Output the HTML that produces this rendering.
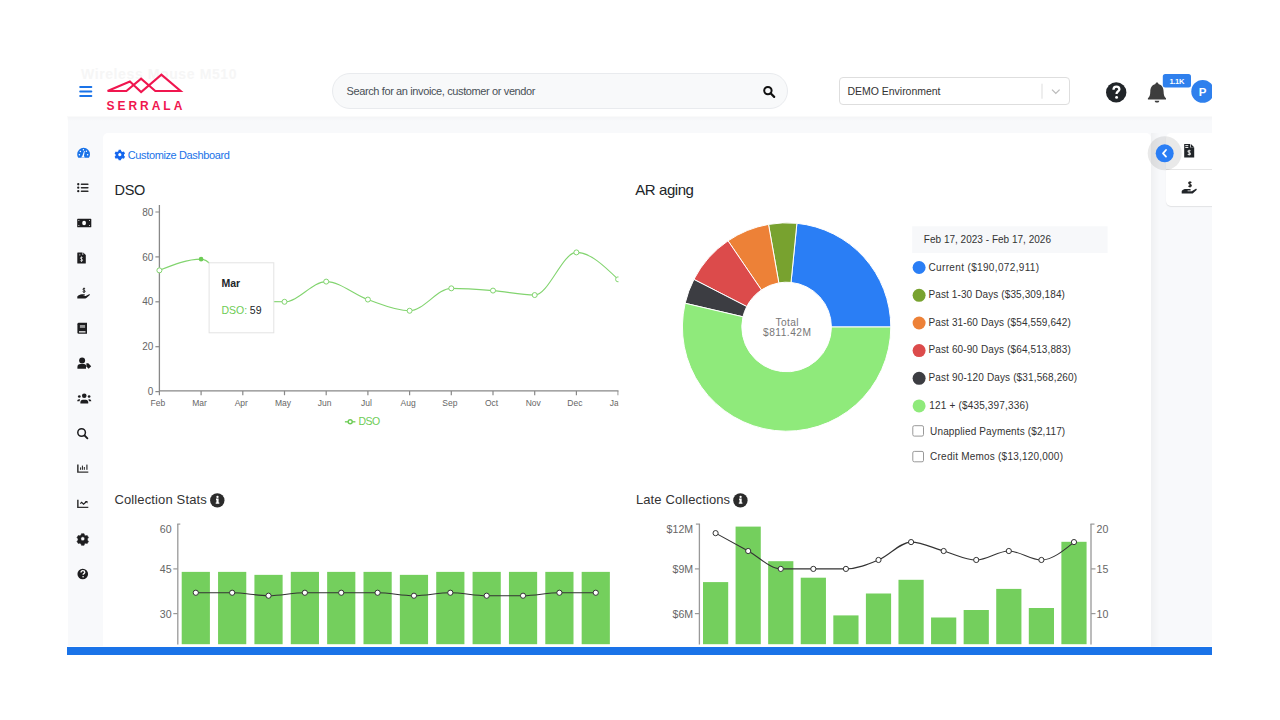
<!DOCTYPE html>
<html><head><meta charset="utf-8">
<style>
*{box-sizing:border-box;margin:0;padding:0}
html,body{width:1280px;height:720px;background:#fff;overflow:hidden;font-family:"Liberation Sans",sans-serif;color:#212529}
.abs{position:absolute}
#page{position:absolute;left:67px;top:0;width:1145px;height:655px;overflow:hidden;background:#fff}
#ghost{left:14px;top:65px;font-size:15px;color:#f3f3f3;white-space:nowrap}
#bg{left:1px;top:116.5px;width:1144px;height:529.5px;background:#f8f9fb}
#card{left:35.8px;top:133px;width:1048px;height:560px;background:#fff;border-radius:5px}
#side2{left:1099px;top:133px;width:60px;height:72.5px;background:#fff;border-radius:5px;box-shadow:0 1px 1px rgba(0,0,0,0.09)}
#cshadow{left:1084px;top:133px;width:9px;height:530px;background:linear-gradient(to right,rgba(0,0,0,0.035),rgba(0,0,0,0))}
#hshadow{left:0;top:116px;width:1145px;height:5px;background:linear-gradient(to bottom,rgba(0,0,0,0.025),rgba(0,0,0,0))}
#side2 .div{position:absolute;left:0;top:36px;width:60px;height:1px;background:#e6e6e6}
#bottom{left:0;top:647px;width:1145px;height:8px;background:#1a73e8}
#search{left:264.6px;top:73.2px;width:456.7px;height:35.4px;border-radius:18px;background:#f8f9fa;border:1px solid #e9ebee}
#search span{position:absolute;left:15px;top:10px;font-size:11px;color:#495057;white-space:nowrap}
#env{left:772.3px;top:77.2px;width:230.7px;height:28px;border:1px solid #dedede;border-radius:4px;background:#fff}
#env span{position:absolute;left:7.5px;top:7px;font-size:11px;color:#333;white-space:nowrap}
.t{position:absolute;white-space:nowrap}
svg text{font-family:"Liberation Sans",sans-serif}
.tk{font-size:10px;fill:#666}
.tk2{font-size:10.6px;fill:#666}
.tkx{font-size:8.5px;fill:#666}
</style></head><body>
<div id="page">
  
  <div id="bg" class="abs"></div>
  <div id="hshadow" class="abs"></div><div id="cshadow" class="abs"></div><div id="card" class="abs"></div>
  <div id="side2" class="abs"><div class="div"></div></div>
  <div id="search" class="abs"></div>
  <div id="env" class="abs"></div>
</div>
<div class="abs" id="bottom" style="left:67px"></div>

<svg class="abs" style="left:0;top:0" width="1280" height="720" viewBox="0 0 1280 720">
<defs><clipPath id="pg"><rect x="67" y="0" width="1145" height="647"/></clipPath></defs>
<g clip-path="url(#pg)">
<text x="81" y="78.6" font-size="14" font-weight="bold" fill="#f6f6f6" textLength="155.5" lengthAdjust="spacing">Wireless Mouse M510</text>
<!-- hamburger -->
<g stroke="#1a73e8" stroke-width="2" stroke-linecap="round"><line x1="80.2" y1="86.9" x2="91.3" y2="86.9"/><line x1="80.2" y1="91.5" x2="91.3" y2="91.5"/><line x1="80.2" y1="96" x2="91.3" y2="96"/></g>
<!-- logo -->
<path d="M126.4,91 H107.6 L129.9,81.5 L141.1,92 L161.4,74.6 L180.6,91 H155.3 L141.1,78.6 Z" fill="none" stroke="#f0164f" stroke-width="2.1" stroke-linejoin="miter"/>
<text x="106.6" y="109.8" font-size="12" font-weight="bold" fill="#f0164f" letter-spacing="2.95">SERRALA</text>
<text x="346.5" y="95.1" font-size="11" fill="#495057" textLength="189" lengthAdjust="spacing">Search for an invoice, customer or vendor</text>
<text x="847.5" y="94.9" font-size="10.5" fill="#333" textLength="93" lengthAdjust="spacing">DEMO Environment</text>
<!-- search icon -->
<circle cx="767.9" cy="90.6" r="3.7" fill="none" stroke="#111" stroke-width="2"/>
<line x1="770.6" y1="93.3" x2="774.2" y2="96.9" stroke="#111" stroke-width="2.2" stroke-linecap="round"/>
<!-- env separator & chevron -->
<line x1="1042" y1="83.7" x2="1042" y2="98.7" stroke="#ddd" stroke-width="1"/>
<path d="M1052,89.6 L1055.8,93.4 L1059.6,89.6" fill="none" stroke="#bbb" stroke-width="1.3"/>
<!-- help -->
<circle cx="1116.2" cy="92.4" r="10.2" fill="#212529"/>
<path d="M1113.5,89.8 c0,-2 1.2,-3.2 2.9,-3.2 c1.8,0 3,1.1 3,2.7 c0,2.1 -2.8,2.3 -2.8,4.1 v0.7" fill="none" stroke="#fff" stroke-width="2.3"/><circle cx="1116.6" cy="97.4" r="1.45" fill="#fff"/>
<!-- bell -->
<path d="M1157,82.6 c0.9,0 1.4,0.6 1.4,1.3 c3.6,0.8 5.2,3.8 5.2,7.6 c0,4 1,5.5 2.4,6.8 v1.3 h-18.1 v-1.3 c1.4,-1.3 2.4,-2.8 2.4,-6.8 c0,-3.8 1.6,-6.8 5.2,-7.6 c0,-0.7 0.6,-1.3 1.5,-1.3 z M1154.7,100.7 h4.6 c0,1.3 -1,1.9 -2.3,1.9 c-1.3,0 -2.3,-0.6 -2.3,-1.9z" fill="#3d3d3d"/>
<!-- badge -->
<rect x="1162.8" y="73.9" width="28.2" height="13.6" rx="2.5" fill="#2f80ed"/>
<text x="1169.4" y="83.5" font-size="7.6" font-weight="bold" fill="#fff" textLength="15" lengthAdjust="spacing">1.1K</text>
<!-- avatar -->
<circle cx="1202.7" cy="91.4" r="11.4" fill="#2f80ed"/>
<text x="1202.7" y="95.6" font-size="11.5" font-weight="bold" fill="#fff" text-anchor="middle">P</text>
</g>

<!-- sidebar icons -->
<g fill="#1d1d1f">
 <!-- tachometer (blue) -->
 <path d="M83.6,147.8 a6.4,6.4 0 0 1 6.4,6.4 c0,1.5 -0.5,2.6 -1.1,3.5 h-10.6 c-0.6,-0.9 -1.1,-2 -1.1,-3.5 a6.4,6.4 0 0 1 6.4,-6.4z" fill="#1a73e8"/>
 <g fill="#fff"><circle cx="79.4" cy="154.8" r="0.75"/><circle cx="80.4" cy="151.4" r="0.75"/><circle cx="87.6" cy="154.8" r="0.75"/><circle cx="83.4" cy="149.8" r="0.7"/><circle cx="86.4" cy="151.3" r="0.7"/><path d="M82.2,156.2 l1.9,-5.3 l0.7,0.2 l-0.9,5.1 c0.6,0.3 0.9,0.7 0.9,1.3 h-3.5 c0,-0.6 0.3,-1.1 0.9,-1.3z"/></g>
 <!-- list -->
 <circle cx="78.25" cy="184.25" r="1.15"/><circle cx="78.25" cy="187.7" r="1.15"/><circle cx="78.25" cy="191.2" r="1.15"/>
 <g stroke="#2b2b2b" stroke-width="1.4" stroke-linecap="round"><line x1="81.4" y1="184.25" x2="87.9" y2="184.25"/><line x1="81.4" y1="187.7" x2="87.9" y2="187.7"/><line x1="81.4" y1="191.2" x2="87.9" y2="191.2"/></g>
 <!-- money bill -->
 <rect x="77.2" y="218.8" width="14.1" height="8.5" rx="0.6"/>
 <g fill="#fff"><ellipse cx="84.1" cy="223" rx="1.9" ry="2.25"/><circle cx="78.9" cy="220.5" r="0.5"/><circle cx="78.9" cy="225.5" r="0.5"/><circle cx="89.5" cy="220.5" r="0.5"/><circle cx="89.5" cy="225.5" r="0.5"/></g>
 <!-- file invoice dollar -->
 <path d="M77.8,252.5 h4.7 v2.5 h3.3 v8 a0.5,0.5 0 0 1 -0.5,0.5 h-7.5 a0.5,0.5 0 0 1 -0.5,-0.5 v-10 a0.5,0.5 0 0 1 0.5,-0.5z M83.2,252.5 l2.6,2.6 h-2.6z"/>
 <g fill="#999"><ellipse cx="79.8" cy="254.8" rx="0.6" ry="1"/></g>
 <g transform="translate(79.9,256.4) scale(0.8000,0.8000)"><path d="M3.4,1.9 C3.2,1.3 2.7,1.1 2,1.1 C1.2,1.1 0.65,1.5 0.65,2.15 C0.65,3.6 3.4,3.05 3.4,4.8 C3.4,5.5 2.8,5.9 2,5.9 C1.2,5.9 0.7,5.6 0.5,5 M2,0.2 V6.8" fill="none" stroke="#ddd" stroke-width="1.15"/></g>
 <!-- hand holding usd -->
 <g transform="translate(82.4,287.5) scale(0.8000,0.8000)"><path d="M3.4,1.9 C3.2,1.3 2.7,1.1 2,1.1 C1.2,1.1 0.65,1.5 0.65,2.15 C0.65,3.6 3.4,3.05 3.4,4.8 C3.4,5.5 2.8,5.9 2,5.9 C1.2,5.9 0.7,5.6 0.5,5 M2,0.2 V6.8" fill="none" stroke="#222" stroke-width="1.15"/></g>
 <path d="M77.3,296.6 c1.3,-1.4 2.8,-2.3 4.5,-2.3 h2.5 c0.7,0 0.9,0.8 0.4,1.1 l-1.9,0.6 h2.9 l3.4,-1.7 c0.6,-0.3 1.1,0.4 0.7,0.8 l-3.4,3 c-0.3,0.3 -0.7,0.4 -1.1,0.4 h-8z"/>
 <!-- book -->
 <path d="M78.8,322.8 h8.2 v11 h-8.2 a1.4,1.4 0 0 1 -1.4,-1.4 v-8.2 a1.4,1.4 0 0 1 1.4,-1.4z"/>
 <rect x="79.9" y="325" width="5.2" height="2.9" fill="#9a9a9a"/>
 <rect x="79" y="331" width="6.5" height="1.6" fill="#ccc"/>
 <!-- user tag -->
 <circle cx="82.1" cy="360.4" r="3"/>
 <path d="M77.4,368.8 v-1.6 a3.2,3.2 0 0 1 3.2,-3.2 h3.2 a2.6,2.6 0 0 1 2.2,1.2 v3.6z"/>
 <path d="M86.4,363.3 h1.9 l2.9,2.9 l-2.6,2.6 l-2.2,-2.2z"/>
 <!-- users -->
 <circle cx="84.25" cy="395.8" r="2.3"/><circle cx="79.3" cy="396.5" r="1.35"/><circle cx="89.1" cy="396.5" r="1.35"/>
 <path d="M80.4,403.5 v-1.3 a2.5,2.5 0 0 1 2.5,-2.5 h2.8 a2.5,2.5 0 0 1 2.5,2.5 v1.3z"/>
 <path d="M77.2,401.3 c0,-1.2 0.8,-2 2,-2 h0.9 l-0.6,2z M91.3,401.3 c0,-1.2 -0.8,-2 -2,-2 h-0.9 l0.6,2z"/>
 <!-- search -->
 <circle cx="81.6" cy="432.5" r="3.8" fill="none" stroke="#1d1d1f" stroke-width="1.5"/>
 <line x1="84.6" y1="435.5" x2="87.4" y2="438.3" stroke="#1d1d1f" stroke-width="1.8" stroke-linecap="round"/>
 <!-- chart bar -->
 <path d="M77.1,464.4 h1.5 v7 h9.7 v1.4 h-11.2z" fill="#333"/>
 <rect x="80" y="467.4" width="1.1" height="2.4" fill="#333"/><rect x="81.9" y="465.6" width="1.1" height="4.2" fill="#333"/><rect x="83.8" y="467" width="1.1" height="2.8" fill="#333"/><rect x="86.3" y="464.6" width="1.2" height="5.2" fill="#333"/>
 <!-- chart line -->
 <path d="M77.1,499.8 h1.5 v6.9 h9.7 v1.4 h-11.2z" fill="#333"/>
 <path d="M80.3,503.6 l1.3,-1.2 l2,1.8 l2.6,-2.4" fill="none" stroke="#1d1d1f" stroke-width="1.2"/>
 <path d="M84.9,500.9 h2.6 v2.6z"/>
 <!-- cog -->
 <g transform="translate(82.75,538.75)">
  <path d="M-1.3,-5.1 h2.6 l0.5,1.6 l1.1,0.6 l1.6,-0.4 l1.3,2.2 l-1.1,1.2 v1.3 l1.1,1.2 l-1.3,2.2 l-1.6,-0.4 l-1.1,0.6 l-0.5,1.6 h-2.6 l-0.5,-1.6 l-1.1,-0.6 l-1.6,0.4 l-1.3,-2.2 l1.1,-1.2 v-1.3 l-1.1,-1.2 l1.3,-2.2 l1.6,0.4 l1.1,-0.6z M0,-1.9 a1.9,1.9 0 1 0 0.01,0z" fill-rule="evenodd" stroke="#1d1d1f" stroke-width="0.5" stroke-linejoin="round"/>
 </g>
 <!-- question circle -->
 <circle cx="82.75" cy="574" r="5.3"/>
 <path d="M81,572.6 c0,-1.2 0.8,-1.9 1.9,-1.9 c1.1,0 1.9,0.7 1.9,1.6 c0,1.3 -1.7,1.3 -1.7,2.4" fill="none" stroke="#fff" stroke-width="1.3"/>
 <circle cx="83.1" cy="576.8" r="0.8" fill="#fff"/>
</g>

<!-- right side panel icons -->
<g fill="#212529">
 <path d="M1184.2,143.9 h6 v3.6 h4 v10 h-10z M1190.9,143.9 l3.3,3.3 h-3.3z"/>
 <g fill="#fff"><rect x="1185.3" y="145.2" width="3" height="0.9"/><rect x="1185.3" y="147.1" width="3" height="0.9"/></g>
 <g transform="translate(1187.4,149.5) scale(0.9000,0.9000)"><path d="M3.4,1.9 C3.2,1.3 2.7,1.1 2,1.1 C1.2,1.1 0.65,1.5 0.65,2.15 C0.65,3.6 3.4,3.05 3.4,4.8 C3.4,5.5 2.8,5.9 2,5.9 C1.2,5.9 0.7,5.6 0.5,5 M2,0.2 V6.8" fill="none" stroke="#ddd" stroke-width="1.15"/></g>
 <g transform="translate(1188.1,181.0) scale(0.9500,0.9429)"><path d="M3.4,1.9 C3.2,1.3 2.7,1.1 2,1.1 C1.2,1.1 0.65,1.5 0.65,2.15 C0.65,3.6 3.4,3.05 3.4,4.8 C3.4,5.5 2.8,5.9 2,5.9 C1.2,5.9 0.7,5.6 0.5,5 M2,0.2 V6.8" fill="none" stroke="#222" stroke-width="1.15"/></g>
 <path d="M1181.7,191 c1.2,-1.4 2.6,-2 4.2,-2 h4 c0.8,0 1.2,0.8 0.7,1.4 h-3 v0.8 h4.1 l3.8,-2.3 c0.7,-0.5 1.6,0.3 1.1,1 l-3.9,3.7 h-11z"/>
</g>
<!-- collapse button -->
<circle cx="1164.7" cy="153.3" r="17" fill="#000" fill-opacity="0.085"/>
<circle cx="1164.7" cy="153.3" r="9" fill="#2a7ef5"/>
<path d="M1166,150 l-3,3.3 l3,3.3" fill="none" stroke="#fff" stroke-width="1.8" stroke-linecap="round" stroke-linejoin="round"/>

<!-- card content -->
<g fill="#1566ee" transform="translate(119.8,154.7) scale(0.93)">
  <path d="M-1.2,-5.2 h2.4 l0.4,1.5 l1.3,0.7 l1.5,-0.5 l1.2,2.1 l-1.1,1.1 v1.5 l1.1,1.1 l-1.2,2.1 l-1.5,-0.5 l-1.3,0.7 l-0.4,1.5 h-2.4 l-0.4,-1.5 l-1.3,-0.7 l-1.5,0.5 l-1.2,-2.1 l1.1,-1.1 v-1.5 l-1.1,-1.1 l1.2,-2.1 l1.5,0.5 l1.3,-0.7z M0,-1.7 a1.7,1.7 0 1 0 0.01,0z" fill-rule="evenodd"/>
</g>
<text x="127.8" y="158.8" font-size="11" fill="#1a73e8" textLength="102" lengthAdjust="spacing">Customize Dashboard</text>
<text x="114.6" y="194.7" font-size="14.5" fill="#212529" textLength="30.8" lengthAdjust="spacing">DSO</text>
<text x="635.3" y="195.2" font-size="15" fill="#212529" textLength="58.6" lengthAdjust="spacing">AR aging</text>
<text x="114.4" y="503.5" font-size="13" fill="#333" textLength="92.4" lengthAdjust="spacing">Collection Stats</text>
<circle cx="217.3" cy="500.4" r="7.2" fill="#2b2b2b"/><circle cx="217.5" cy="496.9" r="1.15" fill="#fff"/><path d="M216,498.6 h2.6 v3.9 h0.7 v1.3 h-3.6 v-1.3 h0.7 v-2.6 h-0.4z" fill="#fff"/>
<text x="635.9" y="503.5" font-size="13" fill="#333" textLength="94.2" lengthAdjust="spacing">Late Collections</text>
<circle cx="740.4" cy="500.4" r="7.2" fill="#2b2b2b"/><circle cx="740.6" cy="496.9" r="1.15" fill="#fff"/><path d="M739.1,498.6 h2.6 v3.9 h0.7 v1.3 h-3.6 v-1.3 h0.7 v-2.6 h-0.4z" fill="#fff"/>

<!-- DSO chart -->
<g clip-path="url(#dsoclip)">
<defs><clipPath id="dsoclip"><rect x="100" y="200" width="518.5" height="230"/></clipPath></defs>
<path d="M159.4,205 V390.9 H640" fill="none" stroke="#888" stroke-width="1.3"/>
<line x1="155.4" y1="391.6" x2="159.4" y2="391.6" stroke="#888" stroke-width="1.2"/>
<text x="153.4" y="395.2" text-anchor="end" class="tk">0</text>
<line x1="155.4" y1="346.7" x2="159.4" y2="346.7" stroke="#888" stroke-width="1.2"/>
<text x="153.4" y="350.3" text-anchor="end" class="tk">20</text>
<line x1="155.4" y1="301.8" x2="159.4" y2="301.8" stroke="#888" stroke-width="1.2"/>
<text x="153.4" y="305.4" text-anchor="end" class="tk">40</text>
<line x1="155.4" y1="256.9" x2="159.4" y2="256.9" stroke="#888" stroke-width="1.2"/>
<text x="153.4" y="260.5" text-anchor="end" class="tk">60</text>
<line x1="155.4" y1="212" x2="159.4" y2="212" stroke="#888" stroke-width="1.2"/>
<text x="153.4" y="215.6" text-anchor="end" class="tk">80</text>
<line x1="159.4" y1="390.9" x2="159.4" y2="395.2" stroke="#888" stroke-width="1.2"/>
<text x="157.9" y="406" text-anchor="middle" class="tkx">Feb</text>
<line x1="201.1" y1="390.9" x2="201.1" y2="395.2" stroke="#888" stroke-width="1.2"/>
<text x="199.6" y="406" text-anchor="middle" class="tkx">Mar</text>
<line x1="242.8" y1="390.9" x2="242.8" y2="395.2" stroke="#888" stroke-width="1.2"/>
<text x="241.3" y="406" text-anchor="middle" class="tkx">Apr</text>
<line x1="284.5" y1="390.9" x2="284.5" y2="395.2" stroke="#888" stroke-width="1.2"/>
<text x="283" y="406" text-anchor="middle" class="tkx">May</text>
<line x1="326.2" y1="390.9" x2="326.2" y2="395.2" stroke="#888" stroke-width="1.2"/>
<text x="324.7" y="406" text-anchor="middle" class="tkx">Jun</text>
<line x1="367.9" y1="390.9" x2="367.9" y2="395.2" stroke="#888" stroke-width="1.2"/>
<text x="366.4" y="406" text-anchor="middle" class="tkx">Jul</text>
<line x1="409.6" y1="390.9" x2="409.6" y2="395.2" stroke="#888" stroke-width="1.2"/>
<text x="408.1" y="406" text-anchor="middle" class="tkx">Aug</text>
<line x1="451.3" y1="390.9" x2="451.3" y2="395.2" stroke="#888" stroke-width="1.2"/>
<text x="449.8" y="406" text-anchor="middle" class="tkx">Sep</text>
<line x1="493" y1="390.9" x2="493" y2="395.2" stroke="#888" stroke-width="1.2"/>
<text x="491.5" y="406" text-anchor="middle" class="tkx">Oct</text>
<line x1="534.7" y1="390.9" x2="534.7" y2="395.2" stroke="#888" stroke-width="1.2"/>
<text x="533.2" y="406" text-anchor="middle" class="tkx">Nov</text>
<line x1="576.4" y1="390.9" x2="576.4" y2="395.2" stroke="#888" stroke-width="1.2"/>
<text x="574.9" y="406" text-anchor="middle" class="tkx">Dec</text>
<line x1="618.1" y1="390.9" x2="618.1" y2="395.2" stroke="#888" stroke-width="1.2"/>
<text x="616.6" y="406" text-anchor="middle" class="tkx">Jan</text>
<path d="M159.4,270.37C173.3,264.76 187.2,259.14 201.1,259.14C215,259.14 228.9,298.06 242.8,299.56C256.7,301.05 270.6,301.8 284.5,301.8C298.4,301.8 312.3,281.6 326.2,281.6C340.1,281.6 354,294.69 367.9,299.56C381.8,304.42 395.7,310.78 409.6,310.78C423.5,310.78 437.4,288.33 451.3,288.33C465.2,288.33 479.1,289.45 493,290.58C506.9,291.7 520.8,295.06 534.7,295.06C548.6,295.06 562.5,252.41 576.4,252.41C590.3,252.41 604.2,265.88 618.1,279.35" fill="none" stroke="#82d46f" stroke-width="1.1"/>
<circle cx="159.4" cy="270.37" r="2.5" fill="#fff" stroke="#82d46f" stroke-width="1"/>
<circle cx="201.1" cy="259.14" r="2.3" fill="#6dcc55"/>
<circle cx="242.8" cy="299.56" r="2.5" fill="#fff" stroke="#82d46f" stroke-width="1"/>
<circle cx="284.5" cy="301.8" r="2.5" fill="#fff" stroke="#82d46f" stroke-width="1"/>
<circle cx="326.2" cy="281.6" r="2.5" fill="#fff" stroke="#82d46f" stroke-width="1"/>
<circle cx="367.9" cy="299.56" r="2.5" fill="#fff" stroke="#82d46f" stroke-width="1"/>
<circle cx="409.6" cy="310.78" r="2.5" fill="#fff" stroke="#82d46f" stroke-width="1"/>
<circle cx="451.3" cy="288.33" r="2.5" fill="#fff" stroke="#82d46f" stroke-width="1"/>
<circle cx="493" cy="290.58" r="2.5" fill="#fff" stroke="#82d46f" stroke-width="1"/>
<circle cx="534.7" cy="295.06" r="2.5" fill="#fff" stroke="#82d46f" stroke-width="1"/>
<circle cx="576.4" cy="252.41" r="2.5" fill="#fff" stroke="#82d46f" stroke-width="1"/>
<circle cx="618.1" cy="279.35" r="2.5" fill="#fff" stroke="#82d46f" stroke-width="1"/>
</g>
<!-- tooltip -->
<rect x="209.1" y="262.8" width="64.7" height="70" fill="#fff" stroke="#e3e3e3" stroke-width="1"/>
<text x="221.5" y="286.7" font-size="10.5" font-weight="bold" fill="#212529">Mar</text>
<text x="221.5" y="313.9" font-size="10.5" fill="#6dcc55">DSO:</text>
<text x="249.8" y="313.9" font-size="10.5" fill="#212529">59</text>
<!-- legend -->
<line x1="344.9" y1="421.8" x2="355.4" y2="421.8" stroke="#7ed36b" stroke-width="1.5"/>
<circle cx="350.2" cy="421.8" r="2" fill="#fff" stroke="#6dcc55" stroke-width="1.4"/>
<text x="358.4" y="424.8" font-size="10.5" fill="#6dcc55" textLength="21.8" lengthAdjust="spacing">DSO</text>

<!-- donut -->
<path d="M890.8,327 A104.2,104.2 0 0 0 796.9,223.31 L791.03,282.42 A44.8,44.8 0 0 1 831.4,327 Z" fill="#2a7ef5" stroke="#fff" stroke-width="1"/>
<path d="M796.9,223.31 A104.2,104.2 0 0 0 768.52,224.38 L778.82,282.88 A44.8,44.8 0 0 1 791.03,282.42 Z" fill="#78a22f" stroke="#fff" stroke-width="1"/>
<path d="M768.52,224.38 A104.2,104.2 0 0 0 728.03,240.82 L761.42,289.95 A44.8,44.8 0 0 1 778.82,282.88 Z" fill="#ed8137" stroke="#fff" stroke-width="1"/>
<path d="M728.03,240.82 A104.2,104.2 0 0 0 693.9,279.41 L746.75,306.54 A44.8,44.8 0 0 1 761.42,289.95 Z" fill="#dc4b4b" stroke="#fff" stroke-width="1"/>
<path d="M693.9,279.41 A104.2,104.2 0 0 0 685.14,303.26 L742.98,316.79 A44.8,44.8 0 0 1 746.75,306.54 Z" fill="#3c3d42" stroke="#fff" stroke-width="1"/>
<path d="M685.14,303.26 A104.2,104.2 0 1 0 890.8,327 L831.4,327 A44.8,44.8 0 1 1 742.98,316.79 Z" fill="#8fea7b" stroke="#fff" stroke-width="1"/>
<text x="775.4" y="325.7" font-size="10.2" fill="#777" textLength="23.2" lengthAdjust="spacing">Total</text>
<text x="763" y="335.9" font-size="10.2" fill="#777" textLength="48" lengthAdjust="spacing">$811.42M</text>
<!-- legend -->
<rect x="912.2" y="226.3" width="195.4" height="26.7" fill="#f7f8fa"/>
<text x="923.8" y="243" font-size="10" fill="#333" textLength="127.2" lengthAdjust="spacing">Feb 17, 2023 - Feb 17, 2026</text>
<g font-size="10" fill="#333">
<circle cx="919.1" cy="267.5" r="6.5" fill="#2a7ef5"/><text x="928.5" y="270.6" textLength="110.6" lengthAdjust="spacing">Current ($190,072,911)</text>
<circle cx="919.1" cy="295.3" r="6.5" fill="#78a22f"/><text x="928.5" y="298.1" textLength="136.4" lengthAdjust="spacing">Past 1-30 Days ($35,309,184)</text>
<circle cx="919.1" cy="323" r="6.5" fill="#ed8137"/><text x="928.5" y="325.6" textLength="142.3" lengthAdjust="spacing">Past 31-60 Days ($54,559,642)</text>
<circle cx="919.1" cy="350.6" r="6.5" fill="#dc4b4b"/><text x="928.5" y="353.3" textLength="142.3" lengthAdjust="spacing">Past 60-90 Days ($64,513,883)</text>
<circle cx="919.1" cy="378.3" r="6.5" fill="#3c3d42"/><text x="928.5" y="380.8" textLength="148.6" lengthAdjust="spacing">Past 90-120 Days ($31,568,260)</text>
<circle cx="919.1" cy="405.9" r="6.5" fill="#8fea7b"/><text x="929.3" y="409.1" textLength="99.2" lengthAdjust="spacing">121 + ($435,397,336)</text>
<rect x="912.8" y="425.7" width="10.7" height="10.4" rx="1.5" fill="#fff" stroke="#999" stroke-width="1"/><text x="930.1" y="435" textLength="135.1" lengthAdjust="spacing">Unapplied Payments ($2,117)</text>
<rect x="912.8" y="451.4" width="10.7" height="10.4" rx="1.5" fill="#fff" stroke="#999" stroke-width="1"/><text x="930.1" y="459.8" textLength="132.9" lengthAdjust="spacing">Credit Memos ($13,120,000)</text>
</g>

<!-- collection stats -->
<g clip-path="url(#botclip)">
<defs><clipPath id="botclip"><rect x="100" y="500" width="1050" height="147"/></clipPath></defs>
<path d="M177.8,524.1 V644.4" fill="none" stroke="#999" stroke-width="1.3"/>
<line x1="177.2" y1="524.1" x2="180.3" y2="524.1" stroke="#999" stroke-width="1.2"/>
<line x1="173.3" y1="568.9" x2="177.8" y2="568.9" stroke="#999" stroke-width="1.2"/>
<line x1="173.3" y1="613.6" x2="177.8" y2="613.6" stroke="#999" stroke-width="1.2"/>
<text x="171.6" y="532.5" text-anchor="end" class="tk2">60</text>
<text x="171.6" y="572.8" text-anchor="end" class="tk2">45</text>
<text x="171.6" y="617.5" text-anchor="end" class="tk2">30</text>
<rect x="181.7" y="571.88" width="28.2" height="72.32" fill="#74cf5d"/>
<rect x="218.06" y="571.88" width="28.2" height="72.32" fill="#74cf5d"/>
<rect x="254.42" y="574.86" width="28.2" height="69.34" fill="#74cf5d"/>
<rect x="290.78" y="571.88" width="28.2" height="72.32" fill="#74cf5d"/>
<rect x="327.14" y="571.88" width="28.2" height="72.32" fill="#74cf5d"/>
<rect x="363.5" y="571.88" width="28.2" height="72.32" fill="#74cf5d"/>
<rect x="399.86" y="574.86" width="28.2" height="69.34" fill="#74cf5d"/>
<rect x="436.22" y="571.88" width="28.2" height="72.32" fill="#74cf5d"/>
<rect x="472.58" y="571.88" width="28.2" height="72.32" fill="#74cf5d"/>
<rect x="508.94" y="571.88" width="28.2" height="72.32" fill="#74cf5d"/>
<rect x="545.3" y="571.88" width="28.2" height="72.32" fill="#74cf5d"/>
<rect x="581.66" y="571.88" width="28.2" height="72.32" fill="#74cf5d"/>
<path d="M195.8,592.74C207.92,592.74 220.04,592.74 232.16,592.74C244.28,592.74 256.4,595.72 268.52,595.72C280.64,595.72 292.76,592.74 304.88,592.74C317,592.74 329.12,592.74 341.24,592.74C353.36,592.74 365.48,592.74 377.6,592.74C389.72,592.74 401.84,595.72 413.96,595.72C426.08,595.72 438.2,592.74 450.32,592.74C462.44,592.74 474.56,595.72 486.68,595.72C498.8,595.72 510.92,595.72 523.04,595.72C535.16,595.72 547.28,592.74 559.4,592.74C571.52,592.74 583.64,592.74 595.76,592.74" fill="none" stroke="#333" stroke-width="1.1"/>
<circle cx="195.8" cy="592.74" r="2.6" fill="#fff" stroke="#333" stroke-width="1"/>
<circle cx="232.16" cy="592.74" r="2.6" fill="#fff" stroke="#333" stroke-width="1"/>
<circle cx="268.52" cy="595.72" r="2.6" fill="#fff" stroke="#333" stroke-width="1"/>
<circle cx="304.88" cy="592.74" r="2.6" fill="#fff" stroke="#333" stroke-width="1"/>
<circle cx="341.24" cy="592.74" r="2.6" fill="#fff" stroke="#333" stroke-width="1"/>
<circle cx="377.6" cy="592.74" r="2.6" fill="#fff" stroke="#333" stroke-width="1"/>
<circle cx="413.96" cy="595.72" r="2.6" fill="#fff" stroke="#333" stroke-width="1"/>
<circle cx="450.32" cy="592.74" r="2.6" fill="#fff" stroke="#333" stroke-width="1"/>
<circle cx="486.68" cy="595.72" r="2.6" fill="#fff" stroke="#333" stroke-width="1"/>
<circle cx="523.04" cy="595.72" r="2.6" fill="#fff" stroke="#333" stroke-width="1"/>
<circle cx="559.4" cy="592.74" r="2.6" fill="#fff" stroke="#333" stroke-width="1"/>
<circle cx="595.76" cy="592.74" r="2.6" fill="#fff" stroke="#333" stroke-width="1"/>
<path d="M699.4,524.1 V644.4 M1091,524.1 V644.4" fill="none" stroke="#999" stroke-width="1.3"/>
<line x1="700" y1="524.1" x2="695.9" y2="524.1" stroke="#999" stroke-width="1.2"/>
<line x1="1090.4" y1="524.1" x2="1094.5" y2="524.1" stroke="#999" stroke-width="1.2"/>
<text x="693.1" y="532.5" text-anchor="end" class="tk2">$12M</text>
<text x="1096.6" y="532.5" class="tk2">20</text>
<line x1="694.9" y1="568.9" x2="699.4" y2="568.9" stroke="#999" stroke-width="1.2"/>
<line x1="1091" y1="568.9" x2="1095.5" y2="568.9" stroke="#999" stroke-width="1.2"/>
<text x="693.1" y="573" text-anchor="end" class="tk2">$9M</text>
<text x="1096.6" y="573" class="tk2">15</text>
<line x1="694.9" y1="613.6" x2="699.4" y2="613.6" stroke="#999" stroke-width="1.2"/>
<line x1="1091" y1="613.6" x2="1095.5" y2="613.6" stroke="#999" stroke-width="1.2"/>
<text x="693.1" y="617.7" text-anchor="end" class="tk2">$6M</text>
<text x="1096.6" y="617.7" class="tk2">10</text>
<rect x="703" y="582.1" width="25.2" height="62.1" fill="#74cf5d"/>
<rect x="735.58" y="526.6" width="25.2" height="117.6" fill="#74cf5d"/>
<rect x="768.16" y="561.2" width="25.2" height="83" fill="#74cf5d"/>
<rect x="800.74" y="577.7" width="25.2" height="66.5" fill="#74cf5d"/>
<rect x="833.32" y="615.4" width="25.2" height="28.8" fill="#74cf5d"/>
<rect x="865.9" y="593.5" width="25.2" height="50.7" fill="#74cf5d"/>
<rect x="898.48" y="579.8" width="25.2" height="64.4" fill="#74cf5d"/>
<rect x="931.06" y="617.5" width="25.2" height="26.7" fill="#74cf5d"/>
<rect x="963.64" y="610" width="25.2" height="34.2" fill="#74cf5d"/>
<rect x="996.22" y="588.9" width="25.2" height="55.3" fill="#74cf5d"/>
<rect x="1028.8" y="608" width="25.2" height="36.2" fill="#74cf5d"/>
<rect x="1061.38" y="541.8" width="25.2" height="102.4" fill="#74cf5d"/>
<path d="M715.6,533.14C726.46,539.1 737.32,545.06 748.18,551.02C759.04,556.98 769.9,568.9 780.76,568.9C791.62,568.9 802.48,568.9 813.34,568.9C824.2,568.9 835.06,568.9 845.92,568.9C856.78,568.9 867.64,564.43 878.5,559.96C889.36,555.49 900.22,542.08 911.08,542.08C921.94,542.08 932.8,548.04 943.66,551.02C954.52,554 965.38,559.96 976.24,559.96C987.1,559.96 997.96,551.02 1008.82,551.02C1019.68,551.02 1030.54,559.96 1041.4,559.96C1052.26,559.96 1063.12,551.02 1073.98,542.08" fill="none" stroke="#333" stroke-width="1.1"/>
<circle cx="715.6" cy="533.14" r="2.6" fill="#fff" stroke="#333" stroke-width="1"/>
<circle cx="748.18" cy="551.02" r="2.6" fill="#fff" stroke="#333" stroke-width="1"/>
<circle cx="780.76" cy="568.9" r="2.6" fill="#fff" stroke="#333" stroke-width="1"/>
<circle cx="813.34" cy="568.9" r="2.6" fill="#fff" stroke="#333" stroke-width="1"/>
<circle cx="845.92" cy="568.9" r="2.6" fill="#fff" stroke="#333" stroke-width="1"/>
<circle cx="878.5" cy="559.96" r="2.6" fill="#fff" stroke="#333" stroke-width="1"/>
<circle cx="911.08" cy="542.08" r="2.6" fill="#fff" stroke="#333" stroke-width="1"/>
<circle cx="943.66" cy="551.02" r="2.6" fill="#fff" stroke="#333" stroke-width="1"/>
<circle cx="976.24" cy="559.96" r="2.6" fill="#fff" stroke="#333" stroke-width="1"/>
<circle cx="1008.82" cy="551.02" r="2.6" fill="#fff" stroke="#333" stroke-width="1"/>
<circle cx="1041.4" cy="559.96" r="2.6" fill="#fff" stroke="#333" stroke-width="1"/>
<circle cx="1073.98" cy="542.08" r="2.6" fill="#fff" stroke="#333" stroke-width="1"/>
</g>
</svg>
</body></html>
